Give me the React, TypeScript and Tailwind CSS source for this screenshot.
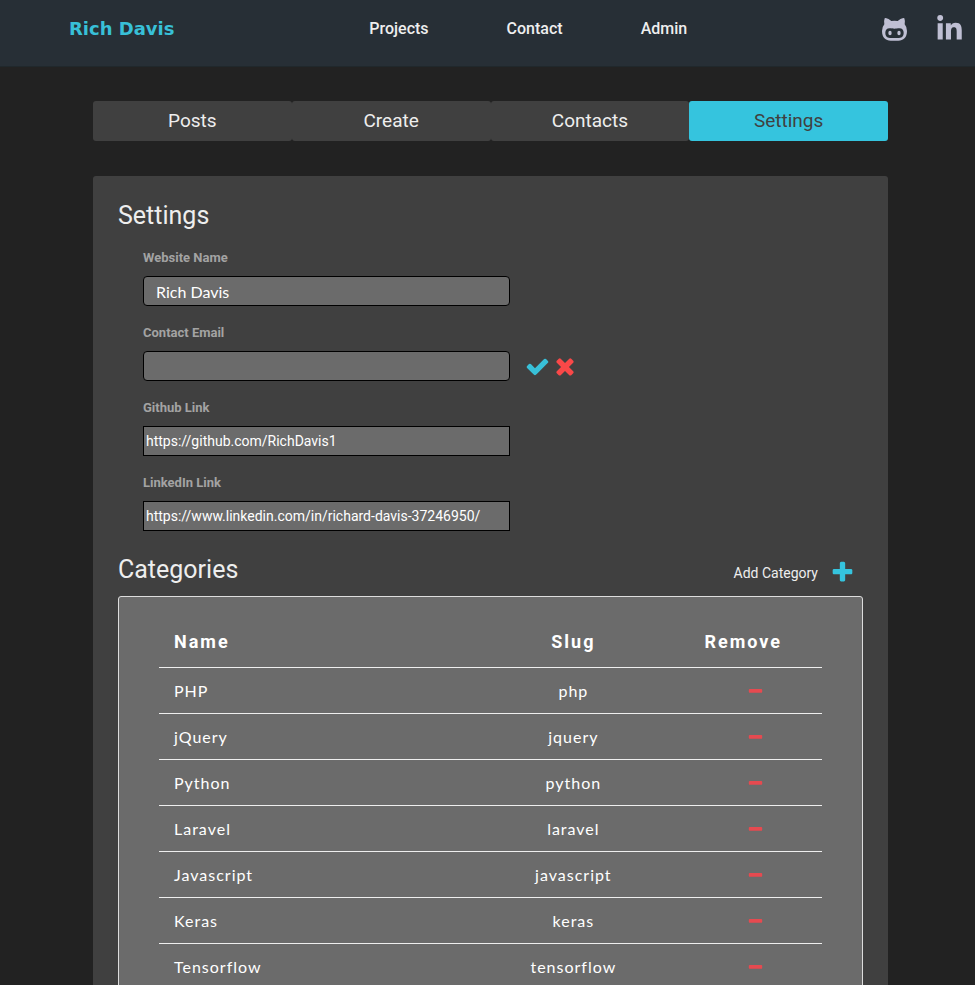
import React from "react";
import { FaLinkedinIn } from "react-icons/fa";

const paths = {
  check:
    "M1671 566q0 40-28 68l-724 724-136 136q-28 28-68 28t-68-28l-136-136-362-362q-28-28-28-68t28-68l136-136q28-28 68-28t68 28l294 295 656-657q28-28 68-28t68 28l136 136q28 28 28 68z",
  times:
    "M1490 1322q0 40-28 68l-136 136q-28 28-68 28t-68-28l-294-294-294 294q-28 28-68 28t-68-28l-136-136q-28-28-28-68t28-68l294-294-294-294q-28-28-28-68t28-68l136-136q28-28 68-28t68 28l294 294 294-294q28-28 68-28t68 28l136 136q28 28 28 68t-28 68l-294 294 294 294q28 28 28 68z",
  plus: "M1600 736v192q0 40-28 68t-68 28h-416v416q0 40-28 68t-68 28h-192q-40 0-68-28t-28-68v-416h-416q-40 0-68-28t-28-68v-192q0-40 28-68t68-28h416v-416q0-40 28-68t68-28h192q40 0 68 28t28 68v416h416q40 0 68 28t28 68z",
  minus:
    "M1600 736v192q0 40-28 68t-68 28h-1216q-40 0-68-28t-28-68v-192q0-40 28-68t68-28h1216q40 0 68 28t28 68z",
};

function Icon({ name, className }: { name: keyof typeof paths; className: string }) {
  return (
    <svg viewBox="0 0 1792 1792" fill="currentColor" className={className} aria-hidden="true">
      <path d={paths[name]} />
    </svg>
  );
}

function GithubFace({ className }: { className: string }) {
  return (
    <svg viewBox="0 0 75 69" fill="currentColor" className={className} aria-hidden="true">
      <path
        fillRule="evenodd"
        d="M8 1Q9 0 11 0Q20 2 28 9Q37.500 7 47 9Q55 2 64 0Q66 0 67 1Q70 9 68 19Q75 27 75 39C75 59 64 68 49 68H26C11 68 0 59 0 39Q0 27 7 19Q5 9 8 1ZM23 31C14 31 10 37 10 44C10 56 17 60 28 60H47C58 60 65 56 65 44C65 37 61 31 52 31C46 31 43 32 37.500 32C32 32 29 31 23 31Z"
      />
      <ellipse cx="24" cy="45" rx="5" ry="7" />
      <ellipse cx="51" cy="45" rx="5" ry="7" />
    </svg>
  );
}

const tabs = ["Posts", "Create", "Contacts", "Settings"];

const categories = [
  ["PHP", "php"],
  ["jQuery", "jquery"],
  ["Python", "python"],
  ["Laravel", "laravel"],
  ["Javascript", "javascript"],
  ["Keras", "keras"],
  ["Tensorflow", "tensorflow"],
];

const roundedInput = "rounded px-3 font-[Lato,sans-serif] text-base";
const plainInput = "px-[2px] text-sm";

function Field({ id, label, value, inputClass, children }: { id: string; label: string; value: string; inputClass: string; children?: React.ReactNode }) {
  return (
    <div className="h-[75px]">
      <label htmlFor={id} className="block text-[13px] leading-4 font-bold text-[#a3a3a3]">
        {label}
      </label>
      <div className="mt-[10px] flex items-center">
        <input
          id={id}
          type="text"
          defaultValue={value}
          className={`h-[30px] w-[367px] border border-black bg-[#6b6b6b] text-white outline-none ${inputClass}`}
        />
        {children}
      </div>
    </div>
  );
}

export default function App() {
  return (
    <div className="h-screen overflow-hidden bg-[#222222] font-[Roboto,sans-serif] text-[#eeeeee]">
      <header className="flex h-[67px] items-center justify-between border-b border-[#20282c] bg-[#272f36] pr-[13px] pb-2 pl-[69px]">
        <a href="#home" className="font-['DejaVu_Sans',sans-serif] text-lg leading-6 font-bold text-[#38c0d8]">
          Rich Davis
        </a>
        <nav className="flex gap-[78px] text-base leading-6 font-medium">
          <a href="#projects">Projects</a>
          <a href="#contact">Contact</a>
          <a href="#admin">Admin</a>
        </nav>
        <div className="flex items-center gap-[30px] text-[#bfbfd3]">
          <a href="#github" aria-label="GitHub">
            <GithubFace className="h-[23px] w-[25px]" />
          </a>
          <a href="#linkedin" aria-label="LinkedIn">
            <FaLinkedinIn className="h-[28px] w-[25px]" />
          </a>
        </div>
      </header>

      <main className="pt-[34px] pr-[87px] pl-[93px]">
        <div role="tablist" className="flex">
          {tabs.map((tab) => (
            <button
              key={tab}
              type="button"
              role="tab"
              aria-selected={tab === "Settings"}
              className={`h-10 flex-1 rounded-[3px] text-[19px] leading-6 ${
                tab === "Settings" ? "bg-[#35c4de] text-[#404040]" : "bg-[#404040]"
              }`}
            >
              {tab}
            </button>
          ))}
        </div>

        <section className="mt-[35px] rounded-[3px] bg-[#404040] px-[25px] pt-[25px] pb-6">
          <h1 className="text-[25px] leading-[30px]">Settings</h1>
          <form className="mt-[19px] pl-[25px]">
            <Field id="site-name" label="Website Name" value="Rich Davis" inputClass={roundedInput} />
            <Field id="contact-email" label="Contact Email" value="" inputClass={roundedInput}>
              <button type="button" aria-label="Save" className="ml-[15px] text-[#38c0d8]">
                <Icon name="check" className="size-[25px]" />
              </button>
              <button type="button" aria-label="Cancel" className="ml-[2px] text-[#f94848]">
                <Icon name="times" className="size-[26px]" />
              </button>
            </Field>
            <Field id="github-link" label="Github Link" value="https://github.com/RichDavis1" inputClass={plainInput} />
            <Field
              id="linkedin-link"
              label="LinkedIn Link"
              value="https://www.linkedin.com/in/richard-davis-37246950/"
              inputClass={plainInput}
            />
          </form>

          <div className="mt-1 flex items-center justify-between">
            <h2 className="text-[25px] leading-[30px]">Categories</h2>
            <button type="button" className="flex items-center gap-3 pt-[6px] pr-2 text-sm leading-5">
              Add Category
              <Icon name="plus" className="size-[25px] text-[#35c4de]" />
            </button>
          </div>

          <div className="mt-[11px] rounded-[3px] border border-[#dddddd] bg-[#6b6b6b] px-10 pt-[18px] pb-5 text-white">
            <table className="w-full table-fixed border-collapse tracking-[1px]">
              <thead>
                <tr className="h-[52px] border-b border-[#eeeeee] text-lg tracking-[2px]">
                  <th className="w-[45%] pt-[2px] pl-[15px] text-left font-bold">Name</th>
                  <th className="w-[35%] pt-[2px] text-center font-bold">Slug</th>
                  <th className="w-[20%] pt-[2px] pl-[15px] text-left font-bold">Remove</th>
                </tr>
              </thead>
              <tbody className="font-[Lato,sans-serif] text-base">
                {categories.map(([name, slug]) => (
                  <tr key={slug} className="h-[46px] border-b border-[#eeeeee]">
                    <td className="pt-[2px] pl-[15px]">{name}</td>
                    <td className="pt-[2px] text-center">{slug}</td>
                    <td className="pt-[2px]">
                      <button type="button" aria-label={`Remove ${name}`} className="mx-auto block text-[#e64a50]">
                        <Icon name="minus" className="size-[17px]" />
                      </button>
                    </td>
                  </tr>
                ))}
              </tbody>
            </table>
          </div>
        </section>
      </main>
    </div>
  );
}
